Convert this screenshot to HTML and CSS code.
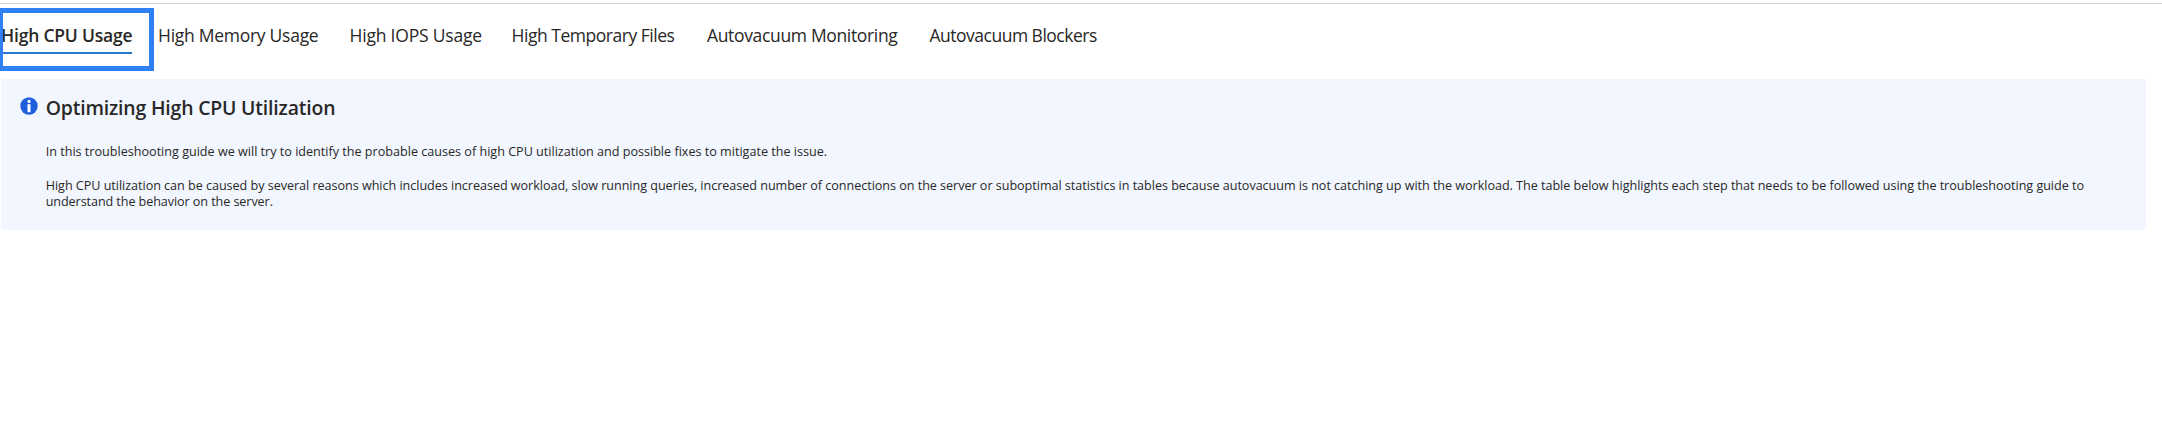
FILE: index.html
```
<!DOCTYPE html>
<html lang="en">
<head>
<meta charset="utf-8">
<title>Troubleshooting guides</title>
<link rel="stylesheet" href="styles.css">
</head>
<body>
<main class="page">
  <nav class="tabs">
    <a class="tab tab-active"><span class="tab-label">High CPU Usage</span></a>
    <a class="tab tab-memory">High Memory Usage</a>
    <a class="tab tab-iops">High IOPS Usage</a>
    <a class="tab tab-files">High Temporary Files</a>
    <a class="tab tab-monitoring">Autovacuum Monitoring</a>
    <a class="tab tab-blockers">Autovacuum Blockers</a>
  </nav>
  <section class="info">
    <svg class="info-icon" viewBox="0 0 18 18"><circle cx="9" cy="9" r="8.7" fill="#1f5fdc"/><circle cx="9" cy="4.4" r="1.6" fill="#fff"/><rect x="7.5" y="7.2" width="3" height="8" fill="#fff"/></svg>
    <div class="info-body">
      <h1 class="title">Optimizing High CPU Utilization</h1>
      <p class="text intro">In this troubleshooting guide we will try to identify the probable causes of high CPU utilization and possible fixes to mitigate the issue.</p>
      <p class="text details">High CPU utilization can be caused by several reasons which includes increased workload, slow running queries, increased number of connections on the server or suboptimal statistics in tables because autovacuum is not catching up with the workload. The table below highlights each step that needs to be followed using the troubleshooting guide to<br><span class="last">understand the behavior on the server.</span></p>
    </div>
  </section>
</main>
</body>
</html>
```
FILE: styles.css
```
body {
  margin: 0;
  background: #fff;
  color: #292827;
  font-family: "Open Sans", "Noto Sans", sans-serif;
  overflow: hidden;
}

.page {
  padding-top: 3px;
}

.tabs {
  display: flex;
  box-sizing: border-box;
  height: 76px;
  border-top: 1px solid #d2d2d2;
}

.tab {
  flex: none;
  padding-top: 19px;
  font-size: 17.5px;
  line-height: 24px;
  white-space: nowrap;
}

.tab-active {
  position: relative;
  width: 158px;
  font-weight: 600;
  letter-spacing: -0.2px;
}

/* Focus frame around the selected tab */
.tab-active::after {
  content: "";
  position: absolute;
  box-sizing: border-box;
  left: -2px;
  top: 4px;
  width: 156px;
  height: 63px;
  border: 5px solid #3080f5;
}

.tab-label {
  display: block;
  box-sizing: border-box;
  width: 132px;
  height: 31px;
  padding-left: 1px;
  border-bottom: 2px solid #2878d2;
}

.tab-memory { width: 191.5px; letter-spacing: -0.27px; }
.tab-iops { width: 162px; letter-spacing: -0.2px; }
.tab-files { width: 195.5px; letter-spacing: -0.47px; }
.tab-monitoring { width: 222.5px; letter-spacing: -0.34px; }
.tab-blockers { letter-spacing: -0.5px; }

.info {
  display: flex;
  box-sizing: border-box;
  height: 151px;
  margin: 0 16px 0 1px;
  border-radius: 2px;
  background: #f1f6ff;
}

.info-icon {
  flex: none;
  width: 18px;
  height: 18px;
  margin: 18px 8px 0 18.7px;
}

.title {
  margin: 16px 0 23px;
  font-size: 19.4px;
  font-weight: 600;
  line-height: 26px;
  letter-spacing: -0.17px;
}

.text {
  margin: 0 0 18px;
  font-size: 12.6px;
  line-height: 16px;
  white-space: nowrap;
}

.details { letter-spacing: -0.035px; }
.last { letter-spacing: -0.08px; }
```
